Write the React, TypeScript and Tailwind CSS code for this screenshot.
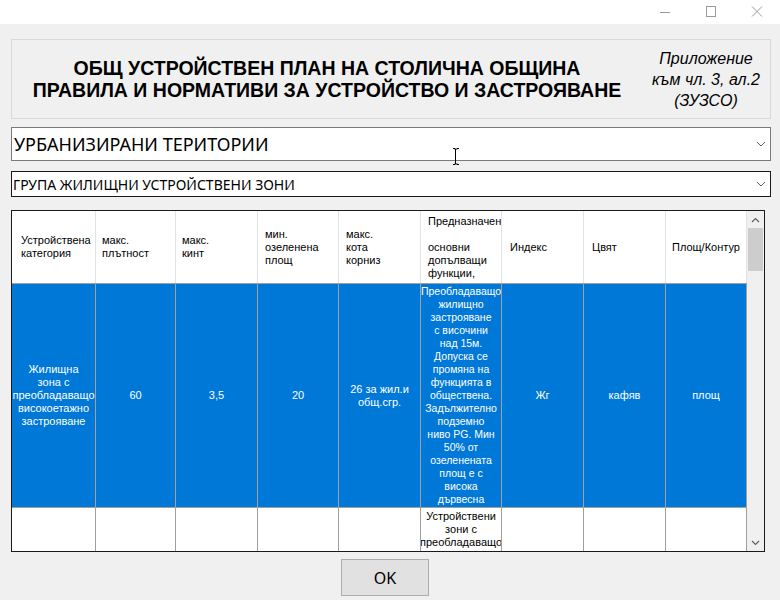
import React from "react";

const Chevron = () => (
  <svg width="10" height="6" viewBox="0 0 10 6" className="shrink-0">
    <path d="M1 1 L5 5 L9 1" fill="none" stroke="#606060" strokeWidth="1" />
  </svg>
);

const HCell = ({ children, cls = "" }: { children: React.ReactNode; cls?: string }) => (
  <div className={`border-r border-[#e3e3e3] flex overflow-hidden ${cls}`}>{children}</div>
);

export default function App() {
  return (
    <div className="w-[780px] h-[600px] bg-[#f0f0f0] flex flex-col overflow-hidden relative" style={{ fontFamily: '"Liberation Sans", Arial, sans-serif' }}>
      {/* title bar */}
      <div className="h-[24px] bg-white flex items-center justify-end shrink-0">
        <div className="w-[46px] h-[24px] flex items-center justify-center">
          <svg width="12" height="12" viewBox="0 0 12 12"><path d="M1 6.5 H11" stroke="#9a9a9a" strokeWidth="1" /></svg>
        </div>
        <div className="w-[46px] h-[24px] flex items-center justify-center">
          <svg width="12" height="12" viewBox="0 0 12 12"><rect x="1.5" y="0.5" width="9" height="10" fill="none" stroke="#9a9a9a" strokeWidth="1" /></svg>
        </div>
        <div className="w-[46px] h-[24px] flex items-center justify-center">
          <svg width="12" height="12" viewBox="0 0 12 12"><path d="M1 0.5 L11 10.5 M11 0.5 L1 10.5" stroke="#9a9a9a" strokeWidth="1" /></svg>
        </div>
      </div>

      <div className="px-[11px] flex flex-col">
        {/* header panel */}
        <div className="mt-[15px] h-[80px] border border-[#d9d9d9] flex items-center w-[760px]">
          <div className="w-[630px] text-center font-bold text-[19.5px] leading-[22px] text-black">
            ОБЩ УСТРОЙСТВЕН ПЛАН НА СТОЛИЧНА ОБЩИНА
            <br />
            ПРАВИЛА И НОРМАТИВИ ЗА УСТРОЙСТВО И ЗАСТРОЯВАНЕ
          </div>
          <div className="flex-1 text-center italic text-[16px] leading-[21px] text-black pt-[1px]">
            Приложение
            <br />
            към чл. 3, ал.2
            <br />
            (ЗУЗСО)
          </div>
        </div>

        {/* combo 1 */}
        <div className="mt-[8px] h-[34px] w-[760px] border border-[#7a7a7a] bg-white flex items-center justify-between pl-[2px] pr-[4px]">
          <span className="text-[18px] text-black" style={{ fontFamily: '"Noto Sans", "Open Sans", sans-serif' }}>УРБАНИЗИРАНИ ТЕРИТОРИИ</span>
          <Chevron />
        </div>

        {/* combo 2 */}
        <div className="mt-[10px] h-[26px] w-[760px] border border-[#1a1a1a] bg-white flex items-center justify-between pl-[1px] pr-[4px]">
          <span className="text-[14px] text-black" style={{ fontFamily: '"Noto Sans", "Open Sans", sans-serif' }}>ГРУПА ЖИЛИЩНИ УСТРОЙСТВЕНИ ЗОНИ</span>
          <Chevron />
        </div>

        {/* grid */}
        <div className="mt-[13px] h-[342px] w-[754px] border border-[#1a1a1a] bg-white flex text-[11px] leading-[13px]">
          <div className="w-[735px] flex flex-col overflow-hidden">
            {/* header */}
            <div className="grid grid-cols-[84px_80px_82px_81px_82px_81px_82px_82px_81px] h-[73px] border-b border-[#a0a0a0] shrink-0 text-black">
              <HCell cls="items-center pl-[9px]"><div>Устройствена<br />категория</div></HCell>
              <HCell cls="items-center pl-[6px]"><div>макс.<br />плътност</div></HCell>
              <HCell cls="items-center pl-[6px]"><div>макс.<br />кинт</div></HCell>
              <HCell cls="items-center pl-[7px]"><div>мин.<br />озеленена<br />площ</div></HCell>
              <HCell cls="items-center pl-[7px]"><div>макс.<br />кота<br />корниз</div></HCell>
              <HCell cls="items-start pl-[7px] pt-[4px]"><div className="whitespace-nowrap">Предназначен<br />&nbsp;<br />основни<br />допълващи<br />функции,</div></HCell>
              <HCell cls="items-center pl-[8px]"><div>Индекс</div></HCell>
              <HCell cls="items-center pl-[8px]"><div>Цвят</div></HCell>
              <HCell cls="items-center pl-[6px]"><div className="whitespace-nowrap">Площ/Контур</div></HCell>
            </div>
            {/* selected row */}
            <div className="grid grid-cols-[84px_80px_82px_81px_82px_81px_82px_82px_81px] h-[224px] border-b border-[#a0a0a0] shrink-0 text-white bg-[#0078d7]">
              <div className="border-r border-[#a0a0a0] flex items-center justify-center text-center overflow-hidden whitespace-nowrap">
                <div>Жилищна<br />зона с<br />преобладаващо<br />високоетажно<br />застрояване</div>
              </div>
              <div className="border-r border-[#a0a0a0] flex items-center justify-center">60</div>
              <div className="border-r border-[#a0a0a0] flex items-center justify-center">3,5</div>
              <div className="border-r border-[#a0a0a0] flex items-center justify-center">20</div>
              <div className="border-r border-[#a0a0a0] flex items-center justify-center text-center whitespace-nowrap">
                <div>26 за жил.и<br />общ.сгр.</div>
              </div>
              <div className="border-r border-[#a0a0a0] flex items-start justify-center text-center pt-[1px] overflow-hidden">
                <div className="text-[10.5px]">Преобладаващо<br />жилищно<br />застрояване<br />с височини<br />над 15м.<br />Допуска се<br />промяна на<br />функцията в<br />обществена.<br />Задължително<br />подземно<br />ниво PG. Мин<br />50% от<br />озеленената<br />площ е с<br />висока<br />дървесна</div>
              </div>
              <div className="border-r border-[#a0a0a0] flex items-center justify-center">Жг</div>
              <div className="border-r border-[#a0a0a0] flex items-center justify-center">кафяв</div>
              <div className="border-r border-[#a0a0a0] flex items-center justify-center">площ</div>
            </div>
            {/* next row */}
            <div className="grid grid-cols-[84px_80px_82px_81px_82px_81px_82px_82px_81px] flex-1 text-black bg-white">
              <div className="border-r border-[#a0a0a0]" />
              <div className="border-r border-[#a0a0a0]" />
              <div className="border-r border-[#a0a0a0]" />
              <div className="border-r border-[#a0a0a0]" />
              <div className="border-r border-[#a0a0a0]" />
              <div className="border-r border-[#a0a0a0] flex items-start justify-center text-center pt-[2px] overflow-hidden whitespace-nowrap">
                <div>Устройствени<br />зони с<br />преобладаващо</div>
              </div>
              <div className="border-r border-[#a0a0a0]" />
              <div className="border-r border-[#a0a0a0]" />
              <div className="border-r border-[#a0a0a0]" />
            </div>
          </div>
          {/* scrollbar */}
          <div className="flex-1 bg-[#f0f0f0] flex flex-col items-center">
            <div className="h-[17px] w-full flex items-center justify-center">
              <svg width="9" height="6" viewBox="0 0 9 6"><path d="M1 5 L4.5 1.5 L8 5" fill="none" stroke="#606060" strokeWidth="1.2" /></svg>
            </div>
            <div className="h-[43px] w-[15px] bg-[#cdcdcd]" />
            <div className="flex-1" />
            <div className="h-[17px] w-full flex items-center justify-center">
              <svg width="9" height="6" viewBox="0 0 9 6"><path d="M1 1 L4.5 4.5 L8 1" fill="none" stroke="#606060" strokeWidth="1.2" /></svg>
            </div>
          </div>
        </div>

        {/* OK */}
        <div className="mt-[7px] pl-[330px]">
          <button className="w-[88px] h-[37px] bg-[#e1e1e1] border border-[#adadad] text-[16px] text-black" style={{ fontFamily: '"Noto Sans", "Open Sans", sans-serif' }}>
            OK
          </button>
        </div>
      </div>

      {/* I-beam cursor */}
      <svg className="absolute left-[451px] top-[148px]" width="10" height="17" viewBox="0 0 10 17">
        <path d="M2 0.5 H4 M6 0.5 H8 M4.5 1 V16 M2 16.5 H4 M6 16.5 H8 M3.5 1 H6.5 M3.5 16 H6.5" stroke="#000" strokeWidth="1" fill="none" />
      </svg>
    </div>
  );
}
